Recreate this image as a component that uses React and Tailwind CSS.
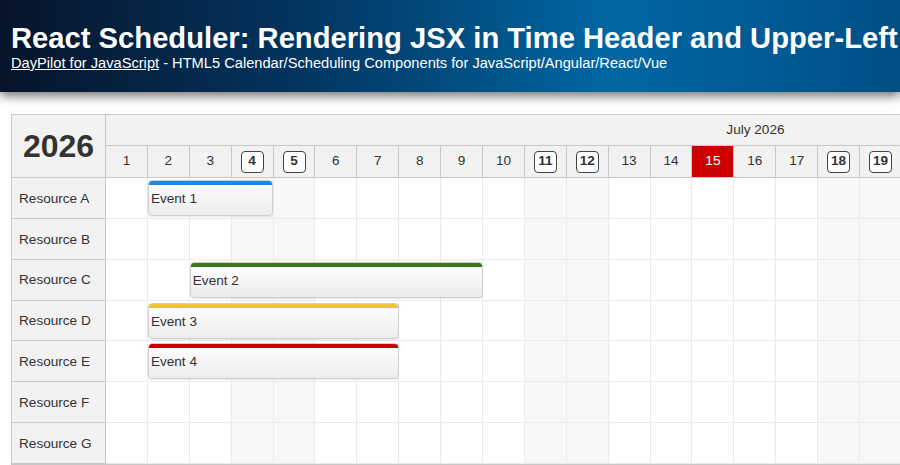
import React from 'react';

const FONT = { fontFamily: '"Liberation Sans", Arial, sans-serif' };

const CELL_W = 41.9;
const ROW_H = 40.86;

const DAYS = Array.from({ length: 31 }, (_, i) => i + 1);
const TODAY = 15;

// Weekends in July 2026 (1st is a Wednesday)
function isWeekend(day) {
  const dow = (day + 2) % 7; // 0 = Sunday
  return dow === 0 || dow === 6;
}

const RESOURCES = ['Resource A', 'Resource B', 'Resource C', 'Resource D', 'Resource E', 'Resource F', 'Resource G'];

const EVENTS = [
  { row: 0, text: 'Event 1', start: 2, end: 4, bar: '#1e88e5' },
  { row: 2, text: 'Event 2', start: 3, end: 9, bar: '#38761d' },
  { row: 3, text: 'Event 3', start: 2, end: 7, bar: '#f1c232' },
  { row: 4, text: 'Event 4', start: 2, end: 7, bar: '#cc0000' },
];

function DayHeader({ day }) {
  if (day === TODAY) {
    return (
      <div className="shrink-0 h-full flex items-center justify-center border-r border-[#c8c8c8] bg-[#cc0000] text-white text-[13.6px]" style={{ width: CELL_W }}>
        {day}
      </div>
    );
  }
  return (
    <div className="shrink-0 h-full flex items-center justify-center border-r border-[#c8c8c8] text-[#333] text-[13.6px]" style={{ width: CELL_W }}>
      {isWeekend(day) ? (
        <span className="w-[23px] h-[22px] flex items-center justify-center rounded-[4px] border-[1.5px] border-[#444] bg-white font-bold">{day}</span>
      ) : (
        day
      )}
    </div>
  );
}

function ResourceRow({ index }) {
  const events = EVENTS.filter(e => e.row === index);
  return (
    <div className="relative flex border-b border-[#ebebeb]" style={{ height: ROW_H }}>
      {DAYS.map(d => (
        <div
          key={d}
          className={`shrink-0 h-full border-r border-[#ebebeb] ${isWeekend(d) ? 'bg-[#f8f8f8]' : 'bg-white'}`}
          style={{ width: CELL_W }}
        />
      ))}
      {events.map(e => (
        <div
          key={e.text}
          className="absolute top-[2px] h-[36px] rounded-[4px] border border-[#cfcfcf] bg-gradient-to-b from-white to-[#ececec] overflow-hidden shadow-[0_1px_1px_rgba(0,0,0,0.08)]"
          style={{ left: (e.start - 1) * CELL_W, width: (e.end - e.start + 1) * CELL_W - 0.5 }}
        >
          <div className="h-[4px]" style={{ backgroundColor: e.bar }} />
          <div className="px-[2px] pt-[7px] text-[13.6px] text-[#333] leading-none">{e.text}</div>
        </div>
      ))}
    </div>
  );
}

export default function App() {
  return (
    <div className="w-[900px] h-[465px] overflow-hidden bg-white" style={FONT}>
      <div className="h-[92px] px-[11px] pt-[21px] text-white bg-[linear-gradient(to_right,#06142a_0%,#02345f_33%,#0067a3_68%,#005a93_85%,#004f85_100%)] shadow-[0_4px_10px_rgba(0,0,0,0.55)] relative z-10">
        <h1 className="text-[29.2px] font-bold leading-[34px] whitespace-nowrap">
          React Scheduler: Rendering JSX in Time Header and Upper-Left Corner
        </h1>
        <p className="text-[14.65px] leading-[17px] whitespace-nowrap">
          <span className="underline">DayPilot for JavaScript</span> - HTML5 Calendar/Scheduling Components for JavaScript/Angular/React/Vue
        </p>
      </div>

      <div className="mt-[22px] ml-[11px] flex border border-[#c8c8c8] border-r-0 text-[#333]">
        {/* row headers */}
        <div className="w-[94px] shrink-0 border-r border-[#c8c8c8] bg-[#f2f2f2]">
          <div className="h-[63px] flex items-center justify-center border-b border-[#c8c8c8] text-[32px] font-bold text-[#333]">
            2026
          </div>
          {RESOURCES.map(r => (
            <div key={r} className="flex items-center pl-[7px] pt-[2px] text-[13.6px] border-b border-[#c8c8c8]" style={{ height: ROW_H }}>
              {r}
            </div>
          ))}
        </div>

        {/* time header + grid */}
        <div className="flex-1 min-w-0 overflow-hidden">
          <div className="bg-[#f2f2f2]" style={{ width: CELL_W * 31 }}>
            <div className="h-[31px] flex items-center justify-center border-b border-[#c8c8c8] text-[13.6px] text-[#333]">
              July 2026
            </div>
            <div className="h-[32px] flex border-b border-[#c8c8c8]">
              {DAYS.map(d => (
                <DayHeader key={d} day={d} />
              ))}
            </div>
          </div>
          <div style={{ width: CELL_W * 31 }}>
            {RESOURCES.map((r, i) => (
              <ResourceRow key={r} index={i} />
            ))}
          </div>
        </div>
      </div>
    </div>
  );
}
